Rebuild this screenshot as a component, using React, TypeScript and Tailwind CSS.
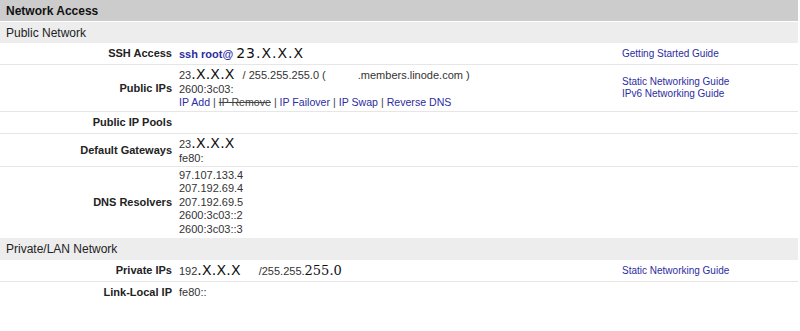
import type { ReactNode } from "react";

const Big = ({ children, wide = false }: { children: ReactNode; wide?: boolean }) => (
	<span
		className={`font-['DejaVu_Sans',sans-serif] text-[14px] text-[#111] ${wide ? "tracking-[1px]" : "tracking-[0.2px]"}`}
	>
		{children}
	</span>
);

const Link = ({ children }: { children: ReactNode }) => (
	<a className="text-[#2d2d9f] cursor-pointer">{children}</a>
);

interface RowProps {
	label: string;
	height: string;
	border?: boolean;
	guides?: string[];
	children?: ReactNode;
}

const Row = ({ label, height, border = true, guides, children }: RowProps) => (
	<div
		className={`flex items-center ${height} ${border ? "border-b border-[#e6e6e6]" : ""}`}
	>
		<div className="w-[172px] text-right font-bold text-[#222]">{label}</div>
		<div className="w-[450px] pl-[7px]">{children}</div>
		<div className="flex flex-col text-[10px] leading-[12px]">
			{guides?.map((g) => (
				<Link key={g}>{g}</Link>
			))}
		</div>
	</div>
);

const SectionBar = ({ title }: { title: string }) => (
	<div className="flex items-center h-[21px] bg-[#ededed] px-[6px] text-[12px] text-[#222]">
		{title}
	</div>
);

export default function App() {
	return (
		<div className="w-[798px] h-[331px] bg-white font-['Liberation_Sans',Arial,sans-serif] text-[11px] text-[#333]">
			<div className="flex items-center h-[21px] bg-[#cccccc] px-[6px] text-[12px] font-bold text-[#111] mb-px">
				Network Access
			</div>
			<SectionBar title="Public Network" />

			<Row label="SSH Access" height="h-[22px]" guides={["Getting Started Guide"]}>
				<span className="font-bold text-[#2d2d9f]">ssh root@</span> <Big wide>23.X.X.X</Big>
			</Row>

			<Row
				label="Public IPs"
				height="h-[47px]"
				guides={["Static Networking Guide", "IPv6 Networking Guide"]}
			>
				<div className="leading-[15px]">
					23<Big>.X.X.X</Big>
					<span className="ml-[8px]">/ 255.255.255.0 (</span>
					<span className="ml-[32px]">.members.linode.com )</span>
				</div>
				<div className="leading-[13px]">2600:3c03:</div>
				<div className="leading-[13px] text-[#2d2d9f] text-[10.6px]">
					IP Add <span className="text-[#444]">|</span>{" "}
					<span className="line-through text-[#444]">IP Remove</span>{" "}
					<span className="text-[#444]">|</span> IP Failover{" "}
					<span className="text-[#444]">|</span> IP Swap{" "}
					<span className="text-[#444]">|</span> Reverse DNS
				</div>
			</Row>

			<Row label="Public IP Pools" height="h-[22px]" />

			<Row label="Default Gateways" height="h-[33px]">
				<div className="leading-[16px]">
					23<Big>.X.X.X</Big>
				</div>
				<div className="leading-[13px]">fe80:</div>
			</Row>

			<Row label="DNS Resolvers" height="h-[71px]" border={false}>
				<div className="leading-[13.5px]">
					<div>97.107.133.4</div>
					<div>207.192.69.4</div>
					<div>207.192.69.5</div>
					<div>2600:3c03::2</div>
					<div>2600:3c03::3</div>
				</div>
			</Row>

			<div className="h-[22px] flex items-center bg-[#ededed] px-[6px] text-[12px] text-[#222]">
				Private/LAN Network
			</div>

			<Row label="Private IPs" height="h-[22px]" guides={["Static Networking Guide"]}>
				192<Big>.X.X.X</Big>
				<span className="ml-[18px]">/255.255.</span>
				<span className="font-['DejaVu_Serif',serif] text-[13px] text-[#111]">255.0</span>
			</Row>

			<Row label="Link-Local IP" height="h-[21px]" border={false}>
				fe80::
			</Row>
		</div>
	);
}
